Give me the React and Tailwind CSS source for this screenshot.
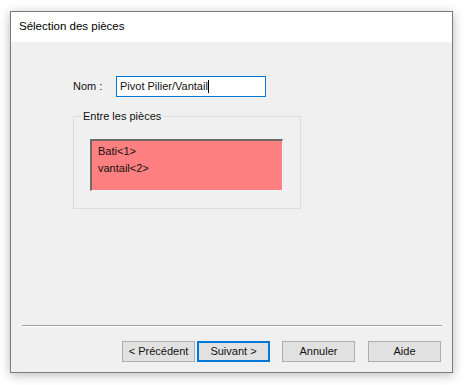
export default function App() {
  const font = { fontFamily: '"Liberation Sans", Arial, sans-serif' };
  return (
    <div className="w-[469px] h-[385px] bg-white overflow-hidden" style={font}>
      <div className="ml-[10px] mt-[11px] w-[443px] h-[362px] border border-[#7a7a7a] bg-[#f0f0f0] flex flex-col shadow-[0_2px_10px_rgba(0,0,0,0.28)]">
        <div className="h-[30px] bg-white flex items-center pl-[8px] text-[11.5px] text-black">Sélection des pièces</div>
        <div className="flex-1 flex flex-col text-[11px] text-[#111]">
          <div className="flex items-center mt-[34px] ml-[62px]">
            <span className="w-[43px]">Nom :</span>
            <div className="w-[150px] h-[21px] border border-[#0078d7] bg-white flex items-center pl-[3px]">
              <span>Pivot Pilier/Vantail</span>
              <span className="w-px h-[13px] bg-black"></span>
            </div>
          </div>
          <div className="relative ml-[62px] mt-[19px] w-[228px] h-[93px] border border-[#dcdcdc]">
            <span className="absolute left-[7px] top-[-8px] px-[2px] bg-[#f0f0f0] leading-[14px]">Entre les pièces</span>
            <div className="ml-[16px] mt-[22px] w-[193px] h-[52px] bg-[#ff8080] border-t-2 border-l-2 border-b border-r border-t-[#6b6b6b] border-l-[#6b6b6b] border-b-[#f4f4f4] border-r-[#f4f4f4] pl-[6px] pt-[2px] leading-[17px]">
              <div>Bati&lt;1&gt;</div>
              <div>vantail&lt;2&gt;</div>
            </div>
          </div>
          <div className="flex-1"></div>
          <div className="ml-[11px] w-[420px] h-px bg-[#a0a0a0] border-b border-white box-content"></div>
          <div className="flex mt-[14px] mb-[10px] ml-[111px] gap-[2px]">
            <button className="w-[73px] h-[21px] bg-[#e1e1e1] border border-[#adadad] text-[11px] flex items-center justify-center">&lt; Précédent</button>
            <button className="w-[73px] h-[21px] bg-[#e1e1e1] border-2 border-[#0078d7] text-[11px] flex items-center justify-center">Suivant &gt;</button>
            <button className="ml-[10px] w-[73px] h-[21px] bg-[#e1e1e1] border border-[#adadad] text-[11px] flex items-center justify-center">Annuler</button>
            <button className="ml-[11px] w-[73px] h-[21px] bg-[#e1e1e1] border border-[#adadad] text-[11px] flex items-center justify-center">Aide</button>
          </div>
        </div>
      </div>
    </div>
  );
}
